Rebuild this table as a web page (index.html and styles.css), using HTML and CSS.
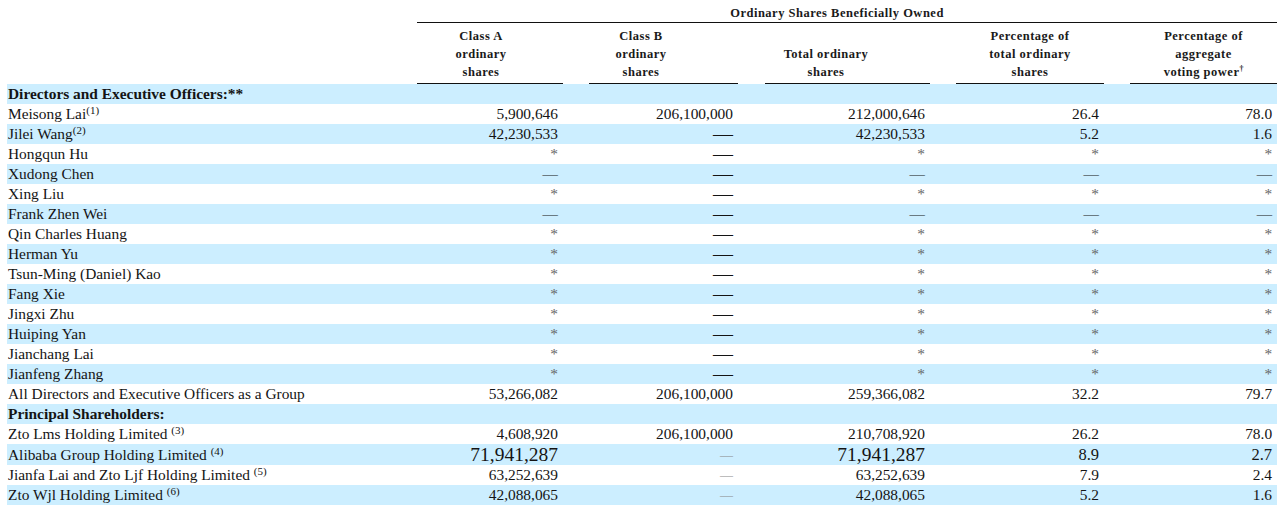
FILE: index.html
```html
<!DOCTYPE html>
<html>
<head>
<meta charset="utf-8">
<title>Ordinary Shares Beneficially Owned</title>
<link rel="stylesheet" href="styles.css">
</head>
<body>
<table class="own">
  <colgroup>
    <col class="c-label"><col class="c-a"><col class="c-gap"><col class="c-b"><col class="c-gap2"><col class="c-c"><col class="c-gap"><col class="c-d"><col class="c-gap"><col class="c-e">
  </colgroup>
  <thead>
    <tr class="h1">
      <th></th>
      <th colspan="9" class="span-title">Ordinary Shares Beneficially Owned</th>
    </tr>
    <tr class="h2">
      <th></th>
      <th class="hc ha">Class A<br>ordinary<br>shares</th>
      <th class="hg"></th>
      <th class="hc hb">Class B<br>ordinary<br>shares</th>
      <th class="hg"></th>
      <th class="hc hcc">Total ordinary<br>shares</th>
      <th class="hg"></th>
      <th class="hc">Percentage of<br>total ordinary<br>shares</th>
      <th class="hg"></th>
      <th class="hc">Percentage of<br>aggregate<br>voting power<sup class="dag">†</sup></th>
    </tr>
  </thead>
  <tbody>
    <tr class="b"><td class="lbl strong">Directors and Executive Officers:**</td><td></td><td></td><td></td><td></td><td></td><td></td><td></td><td></td><td></td></tr>
    <tr><td class="lbl">Meisong Lai<sup class="fn">(1)</sup></td><td class="n">5,900,646</td><td></td><td class="n">206,100,000</td><td></td><td class="n">212,000,646</td><td></td><td class="n">26.4</td><td></td><td class="n">78.0</td></tr>
    <tr class="b"><td class="lbl">Jilei Wang<sup class="fn">(2)</sup></td><td class="n">42,230,533</td><td></td><td class="n db">—</td><td></td><td class="n">42,230,533</td><td></td><td class="n">5.2</td><td></td><td class="n">1.6</td></tr>
    <tr><td class="lbl">Hongqun Hu</td><td class="n ast">*</td><td></td><td class="n db">—</td><td></td><td class="n ast">*</td><td></td><td class="n ast">*</td><td></td><td class="n ast">*</td></tr>
    <tr class="b"><td class="lbl">Xudong Chen</td><td class="n">—</td><td></td><td class="n db">—</td><td></td><td class="n">—</td><td></td><td class="n">—</td><td></td><td class="n">—</td></tr>
    <tr><td class="lbl">Xing Liu</td><td class="n ast">*</td><td></td><td class="n db">—</td><td></td><td class="n ast">*</td><td></td><td class="n ast">*</td><td></td><td class="n ast">*</td></tr>
    <tr class="b"><td class="lbl">Frank Zhen Wei</td><td class="n">—</td><td></td><td class="n db">—</td><td></td><td class="n">—</td><td></td><td class="n">—</td><td></td><td class="n">—</td></tr>
    <tr><td class="lbl">Qin Charles Huang</td><td class="n ast">*</td><td></td><td class="n db">—</td><td></td><td class="n ast">*</td><td></td><td class="n ast">*</td><td></td><td class="n ast">*</td></tr>
    <tr class="b"><td class="lbl">Herman Yu</td><td class="n ast">*</td><td></td><td class="n db">—</td><td></td><td class="n ast">*</td><td></td><td class="n ast">*</td><td></td><td class="n ast">*</td></tr>
    <tr><td class="lbl">Tsun-Ming (Daniel) Kao</td><td class="n ast">*</td><td></td><td class="n db">—</td><td></td><td class="n ast">*</td><td></td><td class="n ast">*</td><td></td><td class="n ast">*</td></tr>
    <tr class="b"><td class="lbl">Fang Xie</td><td class="n ast">*</td><td></td><td class="n db">—</td><td></td><td class="n ast">*</td><td></td><td class="n ast">*</td><td></td><td class="n ast">*</td></tr>
    <tr><td class="lbl">Jingxi Zhu</td><td class="n ast">*</td><td></td><td class="n db">—</td><td></td><td class="n ast">*</td><td></td><td class="n ast">*</td><td></td><td class="n ast">*</td></tr>
    <tr class="b"><td class="lbl">Huiping Yan</td><td class="n ast">*</td><td></td><td class="n db">—</td><td></td><td class="n ast">*</td><td></td><td class="n ast">*</td><td></td><td class="n ast">*</td></tr>
    <tr><td class="lbl">Jianchang Lai</td><td class="n ast">*</td><td></td><td class="n db">—</td><td></td><td class="n ast">*</td><td></td><td class="n ast">*</td><td></td><td class="n ast">*</td></tr>
    <tr class="b"><td class="lbl">Jianfeng Zhang</td><td class="n ast">*</td><td></td><td class="n db">—</td><td></td><td class="n ast">*</td><td></td><td class="n ast">*</td><td></td><td class="n ast">*</td></tr>
    <tr><td class="lbl">All Directors and Executive Officers as a Group</td><td class="n">53,266,082</td><td></td><td class="n">206,100,000</td><td></td><td class="n">259,366,082</td><td></td><td class="n">32.2</td><td></td><td class="n">79.7</td></tr>
    <tr class="b"><td class="lbl strong">Principal Shareholders:</td><td></td><td></td><td></td><td></td><td></td><td></td><td></td><td></td><td></td></tr>
    <tr><td class="lbl">Zto Lms Holding Limited <sup class="fn">(3)</sup></td><td class="n">4,608,920</td><td></td><td class="n">206,100,000</td><td></td><td class="n">210,708,920</td><td></td><td class="n">26.2</td><td></td><td class="n">78.0</td></tr>
    <tr class="b big"><td class="lbl">Alibaba Group Holding Limited <sup class="fn">(4)</sup></td><td class="n lg">71,941,287</td><td></td><td class="n dt">—</td><td></td><td class="n lg">71,941,287</td><td></td><td class="n md">8.9</td><td></td><td class="n md">2.7</td></tr>
    <tr><td class="lbl">Jianfa Lai and Zto Ljf Holding Limited <sup class="fn">(5)</sup></td><td class="n">63,252,639</td><td></td><td class="n dt">—</td><td></td><td class="n">63,252,639</td><td></td><td class="n">7.9</td><td></td><td class="n">2.4</td></tr>
    <tr class="b"><td class="lbl">Zto Wjl Holding Limited <sup class="fn">(6)</sup></td><td class="n">42,088,065</td><td></td><td class="n dt">—</td><td></td><td class="n">42,088,065</td><td></td><td class="n">5.2</td><td></td><td class="n">1.6</td></tr>
  </tbody>
</table>
</body>
</html>
```

FILE: styles.css
```css
html, body {
  margin: 0;
  padding: 0;
  background: #ffffff;
}

body {
  font-family: "Liberation Serif", "Times New Roman", serif;
  color: #141414;
}

.own {
  margin-left: 7px;
  width: 1270px;
  table-layout: fixed;
  border-collapse: separate;
  border-spacing: 0;
}

.c-label { width: 410px; }
.c-a { width: 146px; }
.c-gap { width: 26px; }
.c-gap2 { width: 27px; }
.c-b { width: 149px; }
.c-c { width: 165px; }
.c-d { width: 148px; }
.c-e { width: 147px; }

/* header */
.own th {
  padding: 0;
  font-weight: bold;
  font-size: 12.5px;
  letter-spacing: 0.5px;
  text-align: center;
  vertical-align: bottom;
  color: #1a1a1a;
}

.h1 th {
  padding-top: 6px;
  padding-bottom: 2px;
  line-height: 14px;
}

.h1 .span-title {
  border-bottom: 1px solid #111;
  padding-right: 20px;
}

.h2 th {
  padding-top: 4px;
  padding-bottom: 2px;
  line-height: 18px;
}

.h2 .hc {
  border-bottom: 1px solid #111;
}

.h2 .ha { padding-right: 18px; }
.h2 .hb { padding-right: 45px; }
.h2 .hcc { padding-right: 43px; }

.dag {
  font-size: 8px;
  line-height: 1;
  vertical-align: 5px;
  letter-spacing: 0;
}

/* body */
.own td {
  padding: 0;
  height: 20px;
  font-size: 15.4px;
  line-height: 20px;
  white-space: nowrap;
  overflow: hidden;
}

.own tr.b td {
  background: #cceeff;
}

.own td.lbl {
  padding-left: 1px;
}

.strong {
  font-weight: bold;
}

.own td.n {
  text-align: right;
  padding-right: 5px;
}

.fn {
  font-size: 11px;
  line-height: 1;
  vertical-align: 5px;
}

.own td.ast {
  color: #666666;
}

.own td.db {
  font-size: 20px;
  line-height: 20px;
}

.own td.dt {
  font-size: 13px;
  color: #8a8a8a;
}

.own tr.big td {
  height: 21px;
  line-height: 21px;
}

.own td.lg {
  font-size: 19.5px;
}

.own td.md {
  font-size: 16.5px;
}
```
